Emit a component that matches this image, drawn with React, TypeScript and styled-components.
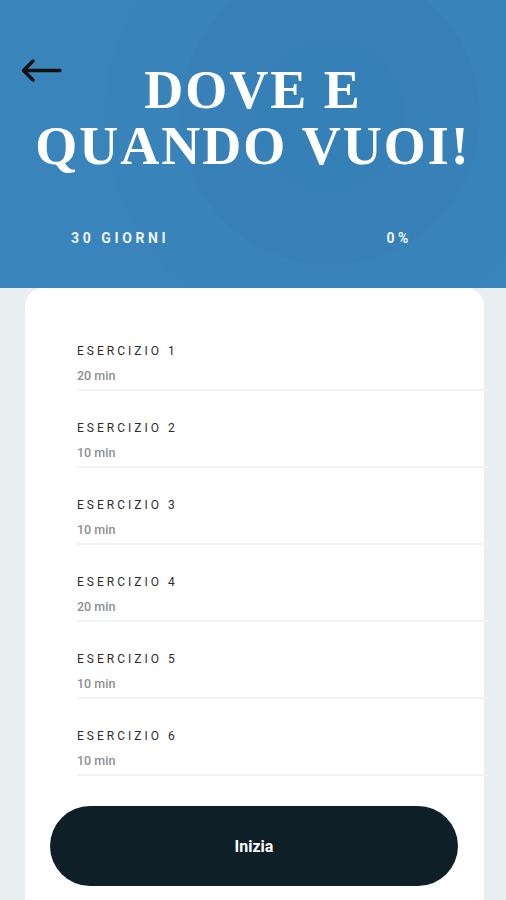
import styled, { createGlobalStyle } from "styled-components";

interface Exercise {
  name: string;
  duration: string;
}

const exercises: Exercise[] = [
  { name: "ESERCIZIO 1", duration: "20 min" },
  { name: "ESERCIZIO 2", duration: "10 min" },
  { name: "ESERCIZIO 3", duration: "10 min" },
  { name: "ESERCIZIO 4", duration: "20 min" },
  { name: "ESERCIZIO 5", duration: "10 min" },
  { name: "ESERCIZIO 6", duration: "10 min" },
];

export default function App() {
  return (
    <>
      <GlobalStyle />
      <StyledPage>
        <StyledHeader>
          <StyledBackButton type="button" aria-label="Indietro">
            <svg width="42" height="28" viewBox="0 0 42 28" fill="none">
              <path
                d="M40 12.5H4M13 3L3.5 12.5L13 22"
                stroke="#111"
                strokeWidth="3.4"
                strokeLinecap="round"
                strokeLinejoin="round"
              />
            </svg>
          </StyledBackButton>
          <StyledTitle>
            DOVE E
            <br />
            QUANDO VUOI!
          </StyledTitle>
          <StyledStats>
            <StyledStat>30 GIORNI</StyledStat>
            <StyledStat>0%</StyledStat>
          </StyledStats>
        </StyledHeader>
        <StyledCard>
          <StyledList>
            {exercises.map((exercise) => (
              <StyledRow key={exercise.name}>
                <StyledRowTitle>{exercise.name}</StyledRowTitle>
                <StyledRowDuration>{exercise.duration}</StyledRowDuration>
              </StyledRow>
            ))}
          </StyledList>
          <StyledStartButton type="button">Inizia</StyledStartButton>
        </StyledCard>
      </StyledPage>
    </>
  );
}

const GlobalStyle = createGlobalStyle`
  body {
    margin: 0;
    background: #e9eef1;
    font-family: Roboto, "Liberation Sans", sans-serif;
  }
`;

const StyledPage = styled.main`
  width: 506px;
  height: 900px;
  overflow: hidden;
  display: flex;
  flex-direction: column;
  background: #e9eef1;
`;

const StyledHeader = styled.header`
  position: relative;
  height: 288px;
  flex-shrink: 0;
  display: flex;
  flex-direction: column;
  align-items: center;
  background: radial-gradient(
    circle at 330px 115px,
    #3580b7 0 75px,
    #3781b8 75px 150px,
    #3883ba 150px 225px,
    #3984ba 225px 300px,
    #3a85bb 300px
  );
`;

const StyledBackButton = styled.button`
  position: absolute;
  left: 20px;
  top: 58px;
  border: 0;
  background: none;
  padding: 0;
  display: flex;
`;

const StyledTitle = styled.h1`
  margin: 62px 0 0;
  font-family: "Liberation Serif", "Times New Roman", serif;
  font-weight: 700;
  font-size: 54px;
  line-height: 56px;
  color: #fff;
  text-align: center;
  letter-spacing: 2px;
`;

const StyledStats = styled.div`
  margin-top: 56px;
  width: 100%;
  padding: 0 94px 0 71px;
  box-sizing: border-box;
  display: flex;
  justify-content: space-between;
`;

const StyledStat = styled.span`
  font-family: Roboto, sans-serif;
  font-weight: 700;
  font-size: 14px;
  letter-spacing: 3.6px;
  color: #eef4fa;
`;

const StyledCard = styled.section`
  flex: 1;
  margin: 0 22px 0 25px;
  background: #fff;
  border-radius: 18px 18px 0 0;
  display: flex;
  flex-direction: column;
  padding-top: 56px;
`;

const StyledList = styled.ul`
  list-style: none;
  margin: 0;
  padding: 0 0 0 52px;
  display: flex;
  flex-direction: column;
  gap: 30px;
`;

const StyledRow = styled.li`
  display: flex;
  flex-direction: column;
  gap: 11px;
  padding-bottom: 6px;
  margin-right: -4px;
  border-bottom: 2px solid #f2f3f4;
`;

const StyledRowTitle = styled.span`
  font-size: 12px;
  line-height: 14px;
  letter-spacing: 3px;
  color: #2b2d2f;
`;

const StyledRowDuration = styled.span`
  font-size: 12.5px;
  line-height: 14px;
  font-weight: 500;
  color: #8c8f93;
`;

const StyledStartButton = styled.button`
  margin: 30px 26px 0 25px;
  height: 80px;
  border: 0;
  border-radius: 40px;
  background: #0f1f27;
  color: #fff;
  font-family: Roboto, sans-serif;
  font-weight: 700;
  font-size: 16px;
`;
